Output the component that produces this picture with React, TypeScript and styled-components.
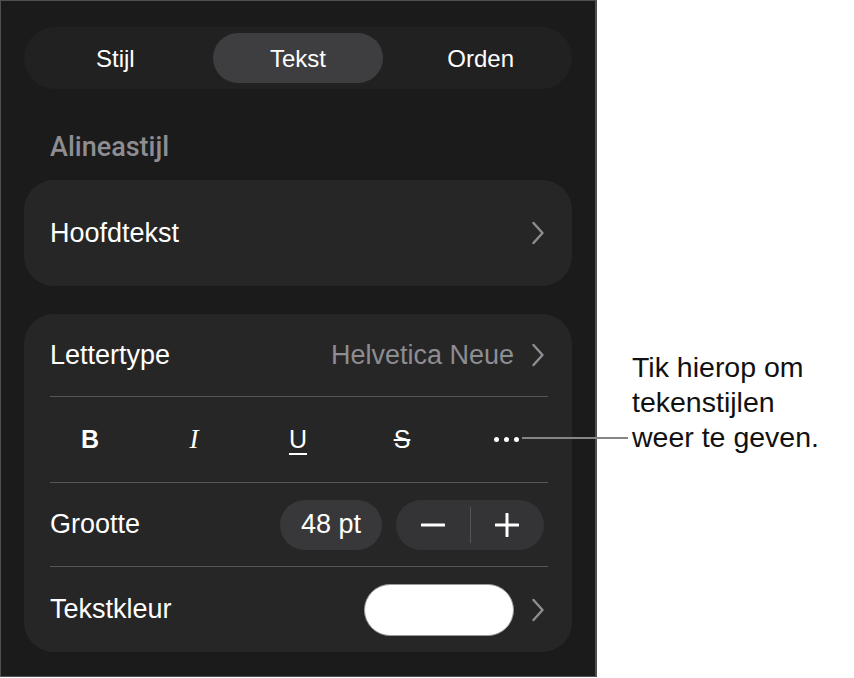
import styled, { createGlobalStyle } from "styled-components"

const GlobalStyle = createGlobalStyle`
	html, body {
		margin: 0;
		padding: 0;
		background: #ffffff;
	}
	body {
		font-family: "Liberation Sans", Arial, sans-serif;
	}
`

const Page = styled.div`
	position: relative;
	display: flex;
	width: 854px;
	height: 678px;
`

const Panel = styled.div`
	box-sizing: border-box;
	width: 597px;
	height: 677px;
	padding: 26px 23px 0;
	background: #1b1b1c;
	border: 1px solid #505050;
	border-right-width: 2px;
	display: flex;
	flex-direction: column;
	color: #ffffff;
`

const Segmented = styled.div`
	display: grid;
	grid-template-columns: repeat(3, 1fr);
	height: 62px;
	padding: 6px 0;
	box-sizing: border-box;
	border-radius: 31px;
	background: #212122;
`

const Segment = styled.div<{ $active?: boolean }>`
	display: flex;
	align-items: center;
	justify-content: center;
	margin: 0 6px;
	padding-top: 2px;
	border-radius: 25px;
	font-size: 24px;
	background: ${(p) => (p.$active ? "#3e3e40" : "transparent")};
`

const SectionTitle = styled.div`
	margin: 44px 0 19px 26px;
	font-family: Roboto, "Liberation Sans", sans-serif;
	font-size: 27px;
	line-height: 28px;
	font-weight: 500;
	color: #8d8d92;
`

const Card = styled.div<{ $gap?: number }>`
	margin-top: ${(p) => p.$gap ?? 0}px;
	background: #262627;
	border-radius: 30px;
	display: flex;
	flex-direction: column;
`

const Row = styled.div<{ $h?: number }>`
	display: flex;
	align-items: center;
	justify-content: space-between;
	height: ${(p) => p.$h ?? 83}px;
	padding: 0 28px 0 26px;
	font-size: 27px;
`

const Divider = styled.div`
	height: 1px;
	margin: 0 24px 0 26px;
	background: #565658;
`

const Trailing = styled.div`
	display: flex;
	align-items: center;
	gap: 18px;
`

const Value = styled.span`
	color: #8d8d92;
`

const StyleRow = styled.div`
	display: grid;
	grid-template-columns: repeat(5, 1fr);
	height: 85px;
	padding: 0 14px;
`

const StyleButton = styled.div<{ $kind: "b" | "i" | "u" | "s" }>`
	display: flex;
	align-items: center;
	justify-content: center;
	font-size: ${(p) => (p.$kind === "i" ? 27 : 25)}px;
	color: #ffffff;
	font-family: ${(p) =>
		p.$kind === "i" ? '"Liberation Serif", serif' : '"Liberation Sans", sans-serif'};
	font-weight: ${(p) => (p.$kind === "b" ? 700 : 400)};
	font-style: ${(p) => (p.$kind === "i" ? "italic" : "normal")};
	text-decoration: ${(p) =>
		p.$kind === "u" ? "underline" : p.$kind === "s" ? "line-through" : "none"};
	text-decoration-thickness: 2px;
	text-underline-offset: 5px;
`

const Dots = styled.div`
	display: flex;
	align-items: center;
	justify-content: center;
	gap: 5px;

	span {
		width: 5px;
		height: 5px;
		border-radius: 50%;
		background: #ffffff;
	}
`

const Controls = styled.div`
	display: flex;
	align-items: center;
	gap: 14px;
`

const SizePill = styled.div`
	display: flex;
	align-items: center;
	justify-content: center;
	width: 102px;
	height: 50px;
	border-radius: 25px;
	background: #38383a;
	font-size: 27px;
`

const Stepper = styled.div`
	display: flex;
	align-items: center;
	width: 148px;
	height: 50px;
	border-radius: 25px;
	background: #343436;
`

const StepButton = styled.div`
	flex: 1;
	display: flex;
	align-items: center;
	justify-content: center;
`

const StepSep = styled.div`
	width: 1px;
	height: 36px;
	background: #555557;
`

const Swatch = styled.div`
	width: 150px;
	height: 52px;
	box-sizing: border-box;
	border-radius: 26px;
	background: #ffffff;
	border: 1px solid #9a9a9a;
`

const Callout = styled.div`
	margin: 350px 0 0 35px;
	font-size: 28.5px;
	line-height: 35px;
	color: #111111;
`

const Leader = styled.div`
	position: absolute;
	left: 522px;
	top: 437px;
	width: 106px;
	height: 2px;
	background: #858585;
`

const Chevron = () => (
	<svg width="12" height="24" viewBox="0 0 12 24" fill="none">
		<polyline
			points="1.5,2 10.5,12 1.5,22"
			stroke="#8d8d92"
			strokeWidth="2.4"
			strokeLinecap="round"
			strokeLinejoin="round"
		/>
	</svg>
)

const Minus = () => (
	<svg width="24" height="24" viewBox="0 0 24 24">
		<line x1="1" y1="12" x2="23" y2="12" stroke="#fff" strokeWidth="3" strokeLinecap="round" />
	</svg>
)

const Plus = () => (
	<svg width="24" height="24" viewBox="0 0 24 24">
		<line x1="1" y1="12" x2="23" y2="12" stroke="#fff" strokeWidth="3" strokeLinecap="round" />
		<line x1="12" y1="1" x2="12" y2="23" stroke="#fff" strokeWidth="3" strokeLinecap="round" />
	</svg>
)

export default function App() {
	return (
		<Page>
			<GlobalStyle />
			<Panel>
				<Segmented>
					<Segment>Stijl</Segment>
					<Segment $active>Tekst</Segment>
					<Segment>Orden</Segment>
				</Segmented>

				<SectionTitle>Alineastijl</SectionTitle>

				<Card>
					<Row $h={106}>
						<span>Hoofdtekst</span>
						<Chevron />
					</Row>
				</Card>

				<Card $gap={28}>
					<Row $h={82}>
						<span>Lettertype</span>
						<Trailing>
							<Value>Helvetica Neue</Value>
							<Chevron />
						</Trailing>
					</Row>
					<Divider />
					<StyleRow>
						<StyleButton $kind="b">B</StyleButton>
						<StyleButton $kind="i">I</StyleButton>
						<StyleButton $kind="u">U</StyleButton>
						<StyleButton $kind="s">S</StyleButton>
						<Dots>
							<span />
							<span />
							<span />
						</Dots>
					</StyleRow>
					<Divider />
					<Row>
						<span>Grootte</span>
						<Controls>
							<SizePill>48 pt</SizePill>
							<Stepper>
								<StepButton>
									<Minus />
								</StepButton>
								<StepSep />
								<StepButton>
									<Plus />
								</StepButton>
							</Stepper>
						</Controls>
					</Row>
					<Divider />
					<Row $h={85}>
						<span>Tekstkleur</span>
						<Trailing>
							<Swatch />
							<Chevron />
						</Trailing>
					</Row>
				</Card>
			</Panel>

			<Callout>
				Tik hierop om
				<br />
				tekenstijlen
				<br />
				weer te geven.
			</Callout>
			<Leader />
		</Page>
	)
}
